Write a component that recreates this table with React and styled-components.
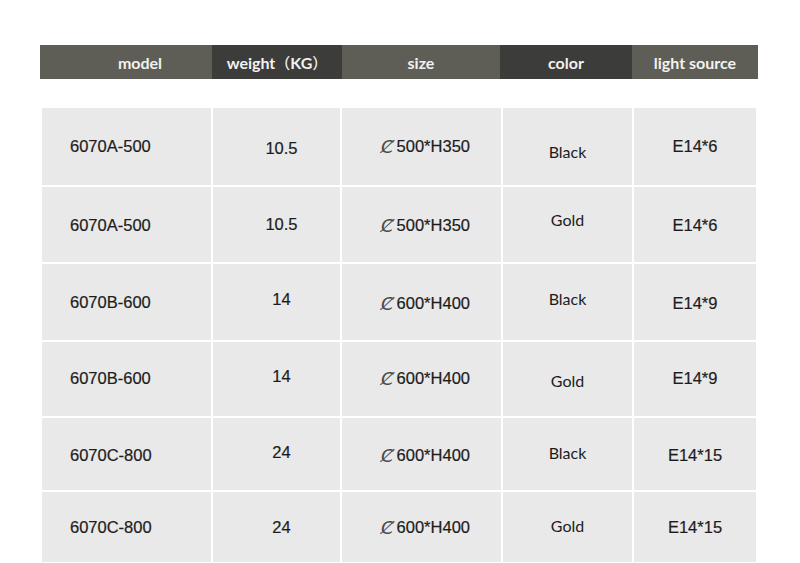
import React from "react";
import styled, { createGlobalStyle } from "styled-components";

const Global = createGlobalStyle`
  html, body { margin: 0; padding: 0; background: #ffffff; }
  body { width: 800px; height: 563px; overflow: hidden; }
`;

const Page = styled.div`
  padding: 45px 0 0 40px;
  box-sizing: border-box;
  width: 800px;
  height: 563px;
`;

const HeaderBar = styled.div`
  display: grid;
  grid-template-columns: 172px 130px 158px 132px 126px;
  height: 34px;
  width: 718px;
`;

const HeadCell = styled.div`
  display: flex;
  align-items: center;
  justify-content: center;
  background: ${(p) => (p.$dark ? "#3c3c3b" : "#5f5e56")};
  color: #f2f2f0;
  font-family: Lato, "Noto Sans CJK SC", sans-serif;
  font-size: 16px;
  font-weight: 700;
  padding-left: ${(p) => p.$shift || 0}px;
  box-sizing: border-box;
  white-space: nowrap;
`;

const Paren = styled.span`
  font-family: "Noto Sans CJK SC", sans-serif;
  font-weight: 500;
  font-size: 15px;
`;

const Table = styled.div`
  margin: 29px 0 0 2px;
  display: grid;
  grid-template-columns: 169px 127px 159px 129px 122px;
  grid-template-rows: 77px 75px 76px 74px 72px 70px;
  gap: 2px;
  width: 714px;
`;

const Cell = styled.div`
  background: #e9e9e9;
  display: flex;
  align-items: center;
  justify-content: ${(p) => (p.$left ? "flex-start" : "center")};
  padding-left: ${(p) => p.$padL || 0}px;
  padding-top: ${(p) => Math.max(0, p.$dy * 2)}px;
  padding-bottom: ${(p) => Math.max(0, -p.$dy * 2)}px;
  box-sizing: border-box;
  color: #1c1c1c;
  font-family: ${(p) =>
    p.$humanist
      ? 'Lato, "Open Sans", sans-serif'
      : '"Liberation Sans", Arial, sans-serif'};
  font-size: ${(p) => (p.$humanist ? "16px" : "16.5px")};
  -webkit-text-stroke: ${(p) => (p.$humanist ? "0" : "0.2px #1c1c1c")};
  white-space: nowrap;
`;

const Diam = styled.span`
  font-family: "DejaVu Sans", sans-serif;
  font-style: italic;
  font-weight: 300;
  color: #4a4a4a;
  -webkit-text-stroke: 0;
  font-size: 18px;
  margin-right: 3px;
`;

const headers = [
  { label: "model", dark: false, shift: 28 },
  { label: "weight", unit: "KG", dark: true, shift: 0 },
  { label: "size", dark: false, shift: 0 },
  { label: "color", dark: true, shift: 0 },
  { label: "light source", dark: false, shift: 0 },
];

const rows = [
  { model: "6070A-500", weight: "10.5", d: "500", h: "350", color: "Black", light: "E14*6", dy: [0, 2, 0, 5, 0] },
  { model: "6070A-500", weight: "10.5", d: "500", h: "350", color: "Gold", light: "E14*6", dy: [1, 0, 1, -5, 1] },
  { model: "6070B-600", weight: "14", d: "600", h: "400", color: "Black", light: "E14*9", dy: [0, -3, 1, -4, 1] },
  { model: "6070B-600", weight: "14", d: "600", h: "400", color: "Gold", light: "E14*9", dy: [-1, -3, -1, 1, -1] },
  { model: "6070C-800", weight: "24", d: "600", h: "400", color: "Black", light: "E14*15", dy: [1, -2, 1, -2, 1] },
  { model: "6070C-800", weight: "24", d: "600", h: "400", color: "Gold", light: "E14*15", dy: [0, 0, 0, -2, 0] },
];

export default function App() {
  return (
    <Page>
      <Global />
      <HeaderBar>
        {headers.map((h) => (
          <HeadCell key={h.label} $dark={h.dark} $shift={h.shift}>
            {h.label}
            {h.unit && (
              <>
                <Paren>（</Paren>
                {h.unit}
                <Paren>）</Paren>
              </>
            )}
          </HeadCell>
        ))}
      </HeaderBar>
      <Table>
        {rows.map((r, i) => (
          <React.Fragment key={i}>
            <Cell $left $padL={28} $dy={r.dy[0]}>{r.model}</Cell>
            <Cell $padL={10} $dy={r.dy[1]}>{r.weight}</Cell>
            <Cell $padL={8} $dy={r.dy[2]}>
              <Diam>Ȼ</Diam>
              {r.d}*H{r.h}
            </Cell>
            <Cell $humanist $dy={r.dy[3]}>{r.color}</Cell>
            <Cell $dy={r.dy[4]}>{r.light}</Cell>
          </React.Fragment>
        ))}
      </Table>
    </Page>
  );
}
